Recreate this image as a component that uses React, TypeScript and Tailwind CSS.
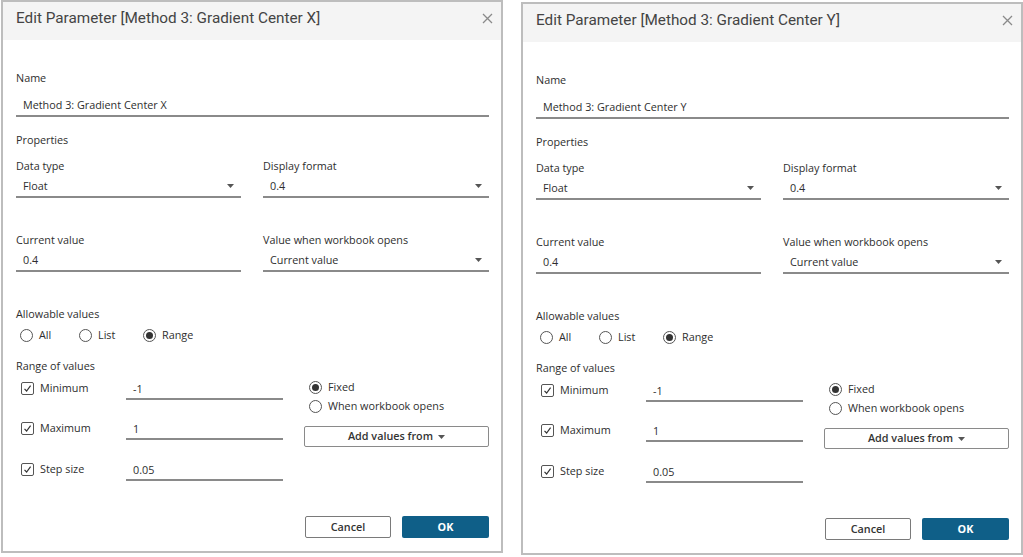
import type { ReactNode } from 'react';

function CloseIcon() {
  return (
    <svg width="11" height="11" viewBox="0 0 11 11" className="text-[#8a8a8a]">
      <path d="M1 1 L10 10 M10 1 L1 10" stroke="currentColor" strokeWidth="1.3" fill="none" />
    </svg>
  );
}

function Caret({ className = '' }: { className?: string }) {
  return (
    <svg width="7" height="4" viewBox="0 0 7 4" className={className}>
      <path d="M0 0 H7 L3.5 4 Z" fill="#555" />
    </svg>
  );
}

function Radio({ checked, children }: { checked?: boolean; children: ReactNode }) {
  return (
    <div className="flex items-center">
      <span className="flex h-[13px] w-[13px] items-center justify-center rounded-full border border-[#555] bg-white">
        {checked && <span className="h-[7px] w-[7px] rounded-full bg-[#333]" />}
      </span>
      <span className="ml-[6px]">{children}</span>
    </div>
  );
}

function Checkbox() {
  return (
    <span className="flex h-[13px] w-[13px] items-center justify-center rounded-[2px] border border-[#555] bg-white">
      <svg width="9" height="9" viewBox="0 0 9 9">
        <path d="M1.5 4.8 L3.6 7 L7.6 1.6" stroke="#333" strokeWidth="1.2" fill="none" />
      </svg>
    </span>
  );
}

function Label({ children }: { children: ReactNode }) {
  return <div className="h-[14px] leading-[14px]">{children}</div>;
}

function TextInput({ value, className = '' }: { value: string; className?: string }) {
  return (
    <div className={`flex h-[22px] items-center border-b-2 border-[#8a8a8a] pl-[7px] ${className}`}>
      {value}
    </div>
  );
}

function Select({ value, className = '' }: { value: string; className?: string }) {
  return (
    <div className={`flex h-[22px] items-center justify-between border-b-2 border-[#8a8a8a] pl-[7px] pr-[7px] ${className}`}>
      <span>{value}</span>
      <Caret />
    </div>
  );
}

const RANGE_ROWS = [
  { label: 'Minimum', value: '-1', gap: 'mt-0' },
  { label: 'Maximum', value: '1', gap: 'mt-[18px]' },
  { label: 'Step size', value: '0.05', gap: 'mt-[19px]' },
];

function Dialog({ axis, className = '' }: { axis: string; className?: string }) {
  return (
    <div className={`flex h-[553px] w-[502px] shrink-0 flex-col border-2 border-[#bdbdbd] bg-white ${className}`}>
      <div className="flex h-[38px] items-start justify-between bg-[#f4f4f4] pl-[13px] pr-[8px] pt-[6px]">
        <span className="font-[Roboto,sans-serif] text-[15.3px] leading-[20px] text-[#444]">
          Edit Parameter [Method 3: Gradient Center {axis}]
        </span>
        <span className="mt-[5px]">
          <CloseIcon />
        </span>
      </div>

      <div className="flex flex-1 flex-col pb-[13px] pl-[13px] pr-[12px] pt-[31px] font-['Open_Sans',sans-serif] text-[10.8px] text-[#2e2e2e]">
        <Label>Name</Label>
        <TextInput value={`Method 3: Gradient Center ${axis}`} className="mt-[10px]" />

        <div className="mt-[16px]">
          <Label>Properties</Label>
        </div>

        <div className="mt-[12px] grid grid-cols-[225px_226px] gap-x-[22px]">
          <div>
            <Label>Data type</Label>
            <Select value="Float" className="mt-[3px]" />
          </div>
          <div>
            <Label>Display format</Label>
            <Select value="0.4" className="mt-[3px]" />
          </div>
        </div>

        <div className="mt-[35px] grid grid-cols-[225px_226px] gap-x-[22px]">
          <div>
            <Label>Current value</Label>
            <TextInput value="0.4" className="mt-[3px]" />
          </div>
          <div>
            <Label>Value when workbook opens</Label>
            <Select value="Current value" className="mt-[3px]" />
          </div>
        </div>

        <div className="mt-[35px]">
          <Label>Allowable values</Label>
        </div>
        <div className="mt-[6px] flex h-[16px] items-center pl-[4px]">
          <div className="w-[59px]">
            <Radio>All</Radio>
          </div>
          <div className="w-[64px]">
            <Radio>List</Radio>
          </div>
          <Radio checked>Range</Radio>
        </div>

        <div className="mt-[16px]">
          <Label>Range of values</Label>
        </div>

        <div className="mt-[5px] flex">
          <div className="flex w-[267px] flex-col">
            {RANGE_ROWS.map((row) => (
              <div key={row.label} className={`flex ${row.gap}`}>
                <div className="flex h-[20px] w-[110px] items-center pl-[5px]">
                  <Checkbox />
                  <span className="ml-[6px]">{row.label}</span>
                </div>
                <TextInput value={row.value} className="w-[157px] pt-[2px]" />
              </div>
            ))}
          </div>

          <div className="ml-[21px] flex w-[185px] flex-col">
            <div className="mt-px flex h-[16px] items-center pl-[5px]">
              <Radio checked>Fixed</Radio>
            </div>
            <div className="mt-[3px] flex h-[16px] items-center pl-[5px]">
              <Radio>When workbook opens</Radio>
            </div>
            <button
              type="button"
              className="mt-[12px] flex h-[21px] items-center justify-center gap-[5px] rounded-[2px] border border-[#8a8a8a] bg-white font-semibold text-[#333]"
            >
              Add values from
              <Caret />
            </button>
          </div>
        </div>

        <div className="mt-auto flex justify-end gap-[11px]">
          <button
            type="button"
            className="h-[22px] w-[86px] rounded-[2px] border border-[#7a7a7a] bg-white font-semibold text-[#333]"
          >
            Cancel
          </button>
          <button
            type="button"
            className="h-[22px] w-[87px] rounded-[2px] bg-[#0f5f88] font-bold text-white"
          >
            OK
          </button>
        </div>
      </div>
    </div>
  );
}

export default function App() {
  return (
    <div className="flex h-[557px] w-[1023px] gap-[18px] overflow-hidden bg-white pl-px">
      <Dialog axis="X" />
      <Dialog axis="Y" className="mt-[2px]" />
    </div>
  );
}
